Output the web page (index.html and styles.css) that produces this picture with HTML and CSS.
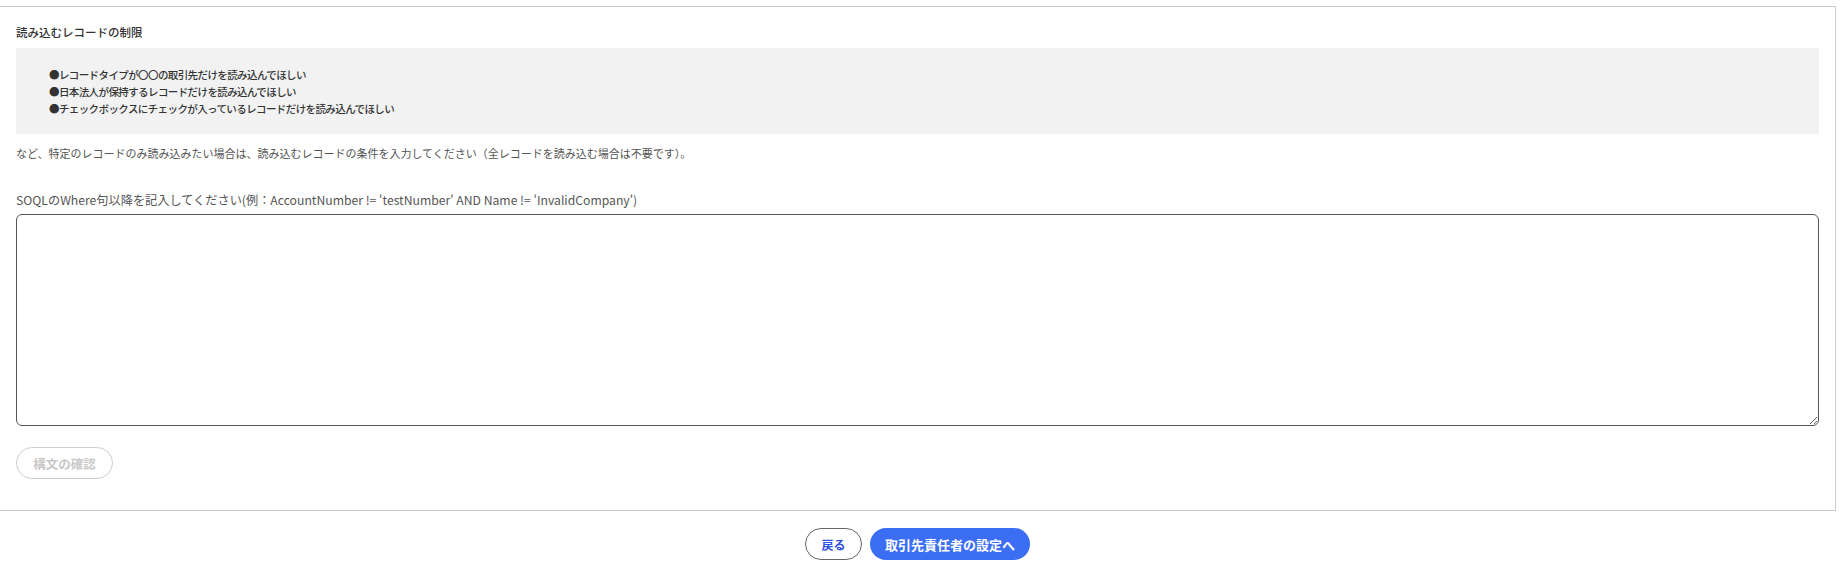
FILE: index.html
```html
<!DOCTYPE html>
<html lang="ja">
<head>
<meta charset="utf-8">
<link rel="stylesheet" href="styles.css">
</head>
<body>
<div class="page">
  <section class="card">
    <h2 class="title">読み込むレコードの制限</h2>
    <div class="examples">
      <p>●レコードタイプが〇〇の取引先だけを読み込んでほしい</p>
      <p>●日本法人が保持するレコードだけを読み込んでほしい</p>
      <p>●チェックボックスにチェックが入っているレコードだけを読み込んでほしい</p>
    </div>
    <p class="note">など、特定のレコードのみ読み込みたい場合は、読み込むレコードの条件を入力してください（全レコードを読み込む場合は不要です）。</p>
    <label class="label" for="soql">SOQLのWhere句以降を記入してください(例：AccountNumber != 'testNumber' AND Name != 'InvalidCompany')</label>
    <textarea id="soql" class="input"></textarea>
    <div class="actions">
      <button class="btn-check" disabled>構文の確認</button>
    </div>
  </section>
  <div class="footer">
    <button class="btn-back">戻る</button>
    <button class="btn-next">取引先責任者の設定へ</button>
  </div>
</div>
</body>
</html>
```

FILE: styles.css
```css
* { box-sizing: border-box; }
html, body { margin: 0; padding: 0; background: #fff; }
body {
  font-family: "Noto Sans CJK JP", "Noto Sans", sans-serif;
  color: #444;
}
.page {
  width: 1837px;
  margin-left: -1px;
  padding-top: 6px;
}
.card {
  border: 1px solid #cccccc;
  padding: 16px 16px 31px 16px;
  display: flex;
  flex-direction: column;
}
.title {
  margin: 0;
  font-size: 11.5px;
  line-height: 18px;
  font-weight: 500;
  color: #333;
}
.examples {
  margin-top: 7px;
  background: #f2f2f2;
  height: 86px;
  padding: 18px 33px 0;
}
.examples p {
  margin: 0;
  font-size: 10.5px;
  line-height: 17px;
  font-weight: 500;
  letter-spacing: -0.6px;
  color: #333;
}
.note {
  margin: 10px 0 0;
  font-size: 11px;
  line-height: 18px;
  color: #555;
}
.label {
  margin-top: 29px;
  font-size: 12.2px;
  line-height: 18px;
  color: #555;
}
.input {
  margin-top: 5px;
  height: 212px;
  width: 100%;
  border: 1px solid #555;
  border-radius: 6px;
  resize: vertical;
  font-family: inherit;
}
.actions {
  margin-top: 21px;
  display: flex;
}
.btn-check {
  height: 32px;
  width: 97px;
  border: 1px solid #cfcfcf;
  border-radius: 16px;
  background: #fff;
  color: #c8c8c8;
  font-family: inherit;
  font-size: 12.5px;
  font-weight: 700;
}
.footer {
  display: flex;
  justify-content: center;
  gap: 8px;
  margin-top: 17px;
}
.btn-back, .btn-next {
  height: 32px;
  border-radius: 16px;
  font-family: inherit;
  font-size: 12px;
  font-weight: 700;
}
.btn-back {
  width: 57px;
  border: 1px solid #666;
  background: #fff;
  color: #2f4fe0;
}
.btn-next {
  width: 160px;
  border: none;
  background: #3b6ef5;
  color: #fff;
  font-size: 13px;
}
```
